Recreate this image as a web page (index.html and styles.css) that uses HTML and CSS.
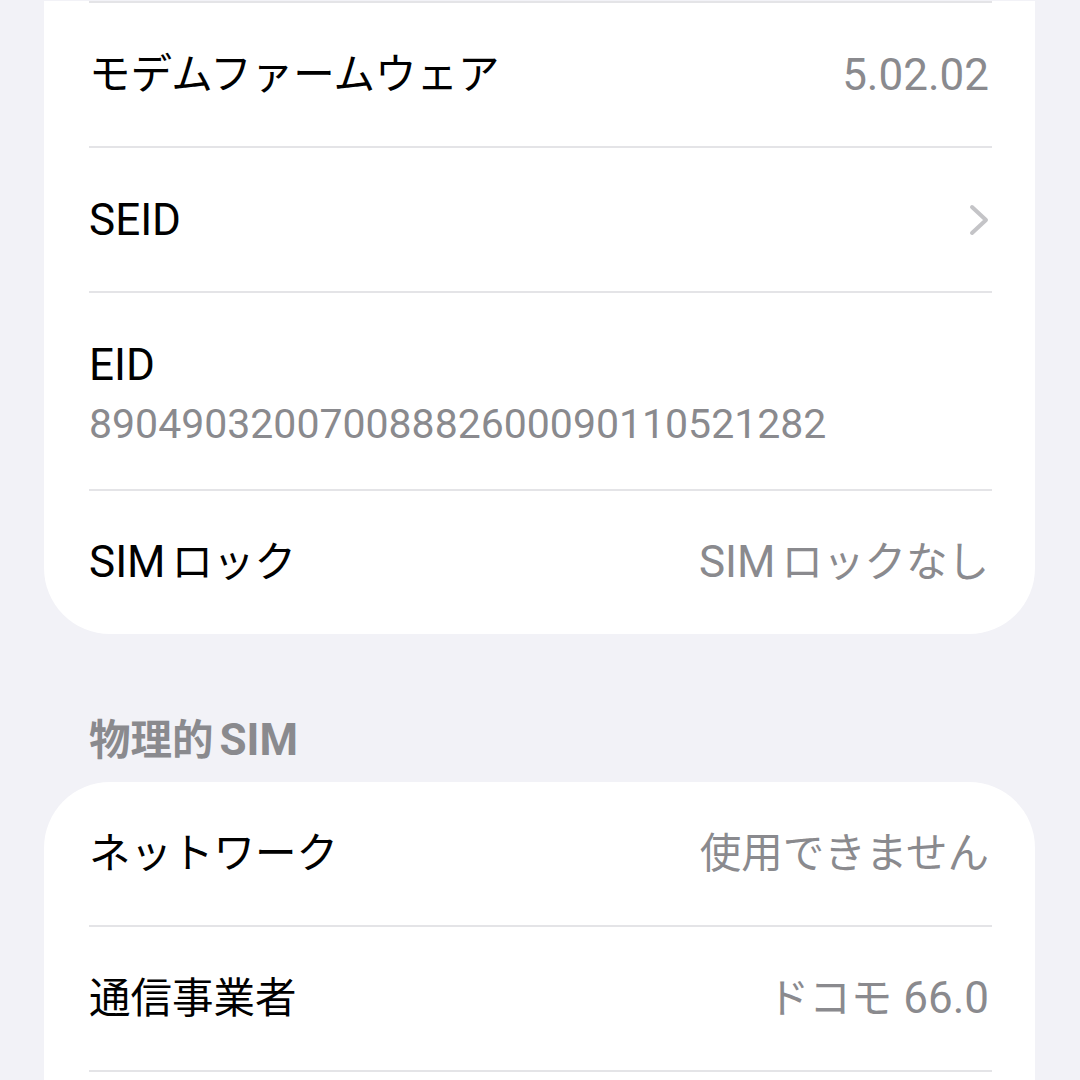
FILE: index.html
```html
<!DOCTYPE html>
<html lang="ja">

<head>
    <meta charset="utf-8">
    <title>情報</title>
    <link rel="stylesheet" href="styles.css">
</head>

<body>
    <div class="page">
        <div class="card cut-top">
            <div class="row with-sep">
                <div class="row-inner">
                    <span class="label ja">モデムファームウェア</span>
                    <span class="value">5.02.02</span>
                </div>
            </div>
            <div class="row with-sep">
                <div class="row-inner">
                    <span class="label">SEID</span>
                    <svg class="chevron" width="20" height="32" viewBox="0 0 20 32">
                        <polyline points="3,3 17,16 3,29" fill="none" stroke="#c4c4c7" stroke-width="4"
                            stroke-linecap="round" stroke-linejoin="round" />
                    </svg>
                </div>
            </div>
            <div class="row with-sep">
                <div class="row-inner stacked">
                    <span class="label">EID</span>
                    <span class="sub">89049032007008882600090110521282</span>
                </div>
            </div>
            <div class="row with-sep">
                <div class="row-inner">
                    <span class="label">SIM<span class="ja gap">ロック</span></span>
                    <span class="value">SIM<span class="ja gap">ロックなし</span></span>
                </div>
            </div>
        </div>

        <div class="section-title"><span class="ja">物理的</span><span class="gap">SIM</span></div>

        <div class="card">
            <div class="row">
                <div class="row-inner">
                    <span class="label ja">ネットワーク</span>
                    <span class="value ja">使用できません</span>
                </div>
            </div>
            <div class="row with-sep">
                <div class="row-inner">
                    <span class="label ja">通信事業者</span>
                    <span class="value"><span class="ja">ドコモ</span> 66.0</span>
                </div>
            </div>
            <div class="row with-sep">
                <div class="row-inner"></div>
            </div>
        </div>
    </div>
</body>

</html>
```

FILE: styles.css
```css
body {
    margin: 0;
    background-color: #f2f2f7;
    font-family: "Roboto", "Noto Sans CJK JP", sans-serif;
    color: #000;
}

.page {
    padding: 1px 45px 0 44px;
}

.card {
    background-color: #fff;
    border-radius: 66px;
    overflow: hidden;
}

.card.cut-top {
    border-radius: 0 0 66px 66px;
}

.row {
    padding: 0 43px 0 45px;
}

.row-inner {
    display: flex;
    justify-content: space-between;
    align-items: center;
    min-height: 143px;
    padding-right: 3px;
    font-size: 44px;
    line-height: 52px;
}

.row.with-sep .row-inner {
    border-top: 2px solid #e4e4e7;
}

.row-inner.stacked {
    flex-direction: column;
    align-items: flex-start;
    justify-content: flex-start;
    padding-top: 46px;
    padding-bottom: 42px;
    min-height: 0;
}

/* japanese glyphs run a bit smaller than the latin ones */
.ja {
    font-size: 41.5px;
}

.gap {
    margin-left: 6px;
}

.value {
    color: #8a8a8e;
}

.sub {
    margin-top: 10px;
    font-size: 41px;
    line-height: 46px;
    color: #8a8a8e;
}

.chevron {
    display: block;
}

.section-title {
    margin: 80px 0 15px;
    padding-left: 45px;
    font-size: 44px;
    line-height: 52px;
    font-weight: bold;
    color: #8a8a8e;
}
```
